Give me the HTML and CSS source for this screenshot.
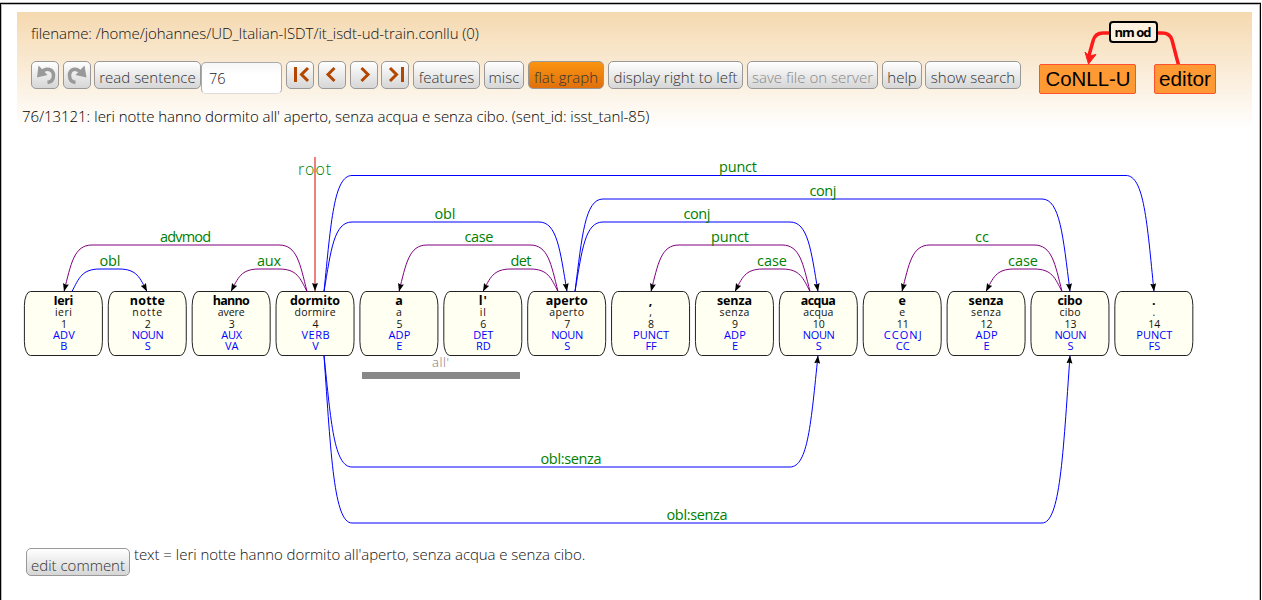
FILE: index.html
```html
<!DOCTYPE html>
<html lang="en">
<head>
<meta charset="utf-8">
<title>CoNLL-U editor</title>
<link rel="stylesheet" href="styles.css">
</head>
<body>
<div class="frame">
  <header class="head">
    <div class="tools">
      <div class="filename">filename: /home/johannes/UD_Italian-ISDT/it_isdt-ud-train.conllu (0)</div>
      <div class="bar">
        <button class="btn icon" aria-label="undo"><svg width="26" height="26" viewBox="0 0 26 26"><path class="turn" d="M9 10.500C14 5 21.500 7 21.500 13.500C21.500 17.500 19 20 15.500 20.500"/><path class="turnhead" d="M6.500 3.500L5 15.500L15.500 13Z"/></svg></button>
        <button class="btn icon redo" aria-label="redo"><svg width="26" height="26" viewBox="0 0 26 26"><path class="turn" d="M17 10.500C12 5 5.500 7 5.500 13.500C5.500 17.500 8 20 11.500 20.500"/><path class="turnhead" d="M20.500 3.500L22.500 15.500L11.500 13Z"/></svg></button>
        <button class="btn read">read sentence</button>
        <input class="number" value="76">
        <button class="btn icon" aria-label="first"><svg width="26" height="26" viewBox="0 0 26 26"><path class="nav" d="M8.500 5V20M21 6L14.500 12.500L21 19"/></svg></button>
        <button class="btn icon" aria-label="previous"><svg width="26" height="26" viewBox="0 0 26 26"><path class="nav" d="M15.500 6L9 12.500L15.500 19"/></svg></button>
        <button class="btn icon" aria-label="next"><svg width="26" height="26" viewBox="0 0 26 26"><path class="nav" d="M10.500 6L17 12.500L10.500 19"/></svg></button>
        <button class="btn icon last" aria-label="last"><svg width="26" height="26" viewBox="0 0 26 26"><path class="nav" d="M8 6L14.500 12.500L8 19M20.500 5V20"/></svg></button>
        <button class="btn features">features</button>
        <button class="btn misc">misc</button>
        <button class="btn flat">flat graph</button>
        <button class="btn rtl">display right to left</button>
        <button class="btn save" disabled>save file on server</button>
        <button class="btn help">help</button>
        <button class="btn search">show search</button>
      </div>
    </div>
    <svg class="logo" width="184" height="80" viewBox="1036 17 184 80">
      <path class="logo-arc" d="M1088 59L1093 41Q1095 33 1103 33H1110M1156 33H1162Q1170 33 1172 40L1178.500 65"/>
      <path class="logo-tip" d="M1088.500 64L1085 52L1089 56L1096 54.500Z"/>
      <rect class="logo-label" x="1110" y="22" width="47" height="20" rx="3"/>
      <text class="logo-small" x="1133" y="37" textLength="37" text-anchor="middle">nm od</text>
      <rect class="logo-box" x="1039.500" y="64.500" width="96" height="29" rx="1.500"/>
      <rect class="logo-box" x="1154.500" y="64.500" width="61" height="29" rx="1.500"/>
      <text class="logo-text" x="1088" y="86" textLength="85" lengthAdjust="spacingAndGlyphs" text-anchor="middle">CoNLL-U</text>
      <text class="logo-text" x="1185" y="86" textLength="52" lengthAdjust="spacingAndGlyphs" text-anchor="middle">editor</text>
    </svg>
  </header>
  <div class="sentence">76/13121: Ieri notte hanno dormito all' aperto, senza acqua e senza cibo. (sent_id: isst_tanl-85)</div>
  <svg class="graph" id="graph" width="1200" height="400" viewBox="17 140 1200 400">
    <defs>
      <marker id="tip" markerUnits="userSpaceOnUse" markerWidth="9" markerHeight="7" refX="8" refY="3" orient="auto"><path d="M0 0L8 3L0 6L1 3Z"/></marker>
    </defs>
  </svg>
  <footer class="comment">
    <button class="btn edit">edit comment</button>
    <span class="comment-text">text = Ieri notte hanno dormito all'aperto, senza acqua e senza cibo.</span>
  </footer>
</div>
<script src="graph.js"></script>
</body>
</html>
```

FILE: styles.css
```css
* { box-sizing: border-box; }

body {
  margin: 0;
  height: 600px;
  overflow: hidden;
  background: #fff;
  color: #111;
  font: 300 15px/20px "Open Sans", "Noto Sans", sans-serif;
}

.frame {
  width: 1261px;
  height: 620px;
  margin-top: 3px;
  padding: 8px 8px 0 16px;
  border: 1px solid #000;
  box-shadow: 0 -1px #bbb, inset 1px 1px #bbb, inset -1px 0 #bbb;
}

.head {
  display: flex;
  justify-content: space-between;
  width: 1235px;
  height: 118px;
  padding-left: 14px;
  padding-right: 32px;
  background: linear-gradient(#f5d9b0, #fff);
}

.filename { padding-top: 11px; letter-spacing: -0.06px; white-space: nowrap; }

.bar { display: flex; gap: 4px; padding-top: 18px; height: 52px; align-items: flex-start; }

.btn {
  flex: none;
  height: 28px;
  padding: 4px 0 0;
  border: 1px solid #999;
  border-radius: 5px;
  background: linear-gradient(#fff, #d6d6d6);
  color: #333;
  font: 300 15px/20px "Open Sans", "Noto Sans", sans-serif;
  text-align: center;
  white-space: nowrap;
}

.icon { width: 28px; padding: 0; }
.icon svg { display: block; }
.redo { margin-right: -1px; }
.last { margin-left: -1px; }
.read { width: 107px; }
.number {
  width: 81px;
  height: 32px;
  margin: 1px 0 0 -4px;
  padding: 0 7px;
  border: 1px solid #aaa;
  border-bottom-color: #ddd;
  border-radius: 5px;
  background: linear-gradient(#f6f6f6, #fff 40%);
  color: #222;
  font: 300 14.5px "Open Sans", sans-serif;
}
.features { width: 67px; }
.misc { width: 40px; }
.flat { width: 76px; background: linear-gradient(#fb9410, #e0700d); }
.rtl { width: 135px; }
.save { width: 131px; color: #888; }
.help { width: 40px; }
.search { width: 96px; margin-left: -1px; }

.turn { fill: none; stroke: #999; stroke-width: 3.5; }
.turnhead { fill: #999; }
.nav { fill: none; stroke: #b34700; stroke-width: 3; }

.logo { flex: none; margin-top: 5px; }
.logo-arc { fill: none; stroke: #ff1a1a; stroke-width: 3.5; }
.logo-tip { fill: #ff1a1a; stroke: #ff1a1a; }
.logo-label { fill: #fff0e0; stroke: #000; stroke-width: 2; }
.logo-box { fill: #ff9933; stroke: #ff5030; }
.logo-small { font: bold 13px "Open Sans", sans-serif; }
.logo-text { font: 20.5px "Liberation Sans", sans-serif; }

.sentence { margin: -24px 0 0 5px; height: 34px; white-space: nowrap; color: #000; letter-spacing: -0.06px; }
.graph { display: block; }

.box { fill: #fffff2; stroke: #222; }
.form { font-weight: 700; font-size: 12.5px; fill: #000; }
.small { font-weight: 400; font-size: 10.5px; fill: #111; }
.pos { font-weight: 400; font-size: 11px; fill: #00f; }
.graph text { text-anchor: middle; }
.dep { font-size: 14.5px; font-weight: 400; fill: #008000; }
.root { font-size: 16px; font-weight: 300; fill: #008000; }
.mwt { font-size: 13px; fill: #777; }
.mwt-bar { fill: #888; }
.edge { fill: none; stroke-width: 1; marker-end: url(#tip); }
.left { stroke: #800080; }
.right { stroke: #00f; }
.rootline { fill: none; stroke: #d00; stroke-width: 1; marker-end: url(#tip); }

.comment { display: flex; gap: 4px; margin: 5px 0 0 9px; }
.edit { width: 104px; height: 28px; margin-top: 3px; padding-top: 6px; }
.comment-text { white-space: nowrap; letter-spacing: -0.07px; margin-top: -1px; }
```

FILE: graph.js
```js
const svg = document.getElementById("graph");

function add(name, attrs, text) {
  const el = document.createElementNS("http://www.w3.org/2000/svg", name);
  for (const key in attrs) if (attrs[key] !== undefined) el.setAttribute(key, attrs[key]);
  if (text !== undefined) el.textContent = text;
  svg.appendChild(el);
}

// form, form width, lemma, lemma width, upos, upos width, xpos
const words = [
  ["Ieri", 20, "ieri", 17, "ADV", 22, "B"],
  ["notte", 35, "notte", 30, "NOUN", 32, "S"],
  ["hanno", 37, "avere", 27, "AUX", 21, "VA"],
  ["dormito", 50, "dormire", 41, "VERB", 28, "V"],
  ["a", 7, "a", 5, "ADP", 22, "E"],
  ["l'", 8, "il", 6, "DET", 20, "RD"],
  ["aperto", 42, "aperto", 35, "NOUN", 32, "S"],
  [",", undefined, ",", undefined, "PUNCT", 36, "FF"],
  ["senza", 35, "senza", 30, "ADP", 22, "E"],
  ["acqua", 35, "acqua", 30, "NOUN", 32, "S"],
  ["e", 7, "e", 6, "CCONJ", 38, "CC"],
  ["senza", 35, "senza", 30, "ADP", 22, "E"],
  ["cibo", 25, "cibo", 21, "NOUN", 32, "S"],
  [".", undefined, ".", undefined, "PUNCT", 36, "FS"]
];
words.forEach((w, i) => {
  const x = 63.4 + i * 83.88;
  add("rect", { class: "box", x: x - 39, y: 291.5, width: 78, height: 64, rx: 6, ry: 14 });
  add("text", { class: "form", x, y: 305, textLength: w[1] }, w[0]);
  add("text", { class: "small", x, y: 316, textLength: w[3] }, w[2]);
  add("text", { class: "small", x: x + 0.5, y: 327.5 }, i + 1);
  add("text", { class: "pos", x: x + 0.5, y: 339, textLength: w[5] }, w[4]);
  add("text", { class: "pos", x: x + 0.5, y: 350 }, w[6]);
});

// start x, end x, height of the line, label, label x, label width
const edges = [
  [307, 64, 245, "advmod", 185.5, 51],
  [72, 147, 269, "obl", 110, 21],
  [307, 231, 269, "aux", 269, 24],
  [324, 567, 222, "obl", 445, 21],
  [558, 399, 245, "case", 479, 29],
  [558, 483, 269, "det", 521, 21],
  [324, 1154, 175.5, "punct", 738, 38],
  [575, 1070, 199, "conj", 823, 27],
  [575, 818, 222, "conj", 697, 27],
  [810, 651, 245, "punct", 730, 38],
  [810, 735, 269, "case", 772, 30],
  [1062, 902, 245, "cc", 982, 14],
  [1062, 986, 269, "case", 1023, 30],
  [324, 818, 467, "obl:senza", 571, 61],
  [324, 1070, 523, "obl:senza", 697, 61]
];
for (const [a, b, y, label, lx, width] of edges) {
  const base = y > 291 ? 355.5 : 291.5;
  const rise = base + (y - base) * 0.6;
  const s = b > a ? 1 : -1;
  add("path", {
    class: "edge " + (s > 0 ? "right" : "left"),
    d: `M${a} ${base}C${a + 7 * s} ${rise} ${a + 10 * s} ${y} ${a + 28 * s} ${y}` +
       `H${b - 28 * s}C${b - 10 * s} ${y} ${b - 7 * s} ${rise} ${b} ${base}`
  });
  add("text", { class: "dep", x: lx, y: Math.floor(y) - 2.8, textLength: width }, label);
}

add("text", { class: "root", x: 314.5, y: 175, textLength: 33 }, "root");
add("path", { class: "rootline", d: "M315 157V291" });
add("text", { class: "mwt", x: 440.5, y: 367, textLength: 17 }, "all'");
add("rect", { class: "mwt-bar", x: 362, y: 372, width: 158, height: 7 });
```
